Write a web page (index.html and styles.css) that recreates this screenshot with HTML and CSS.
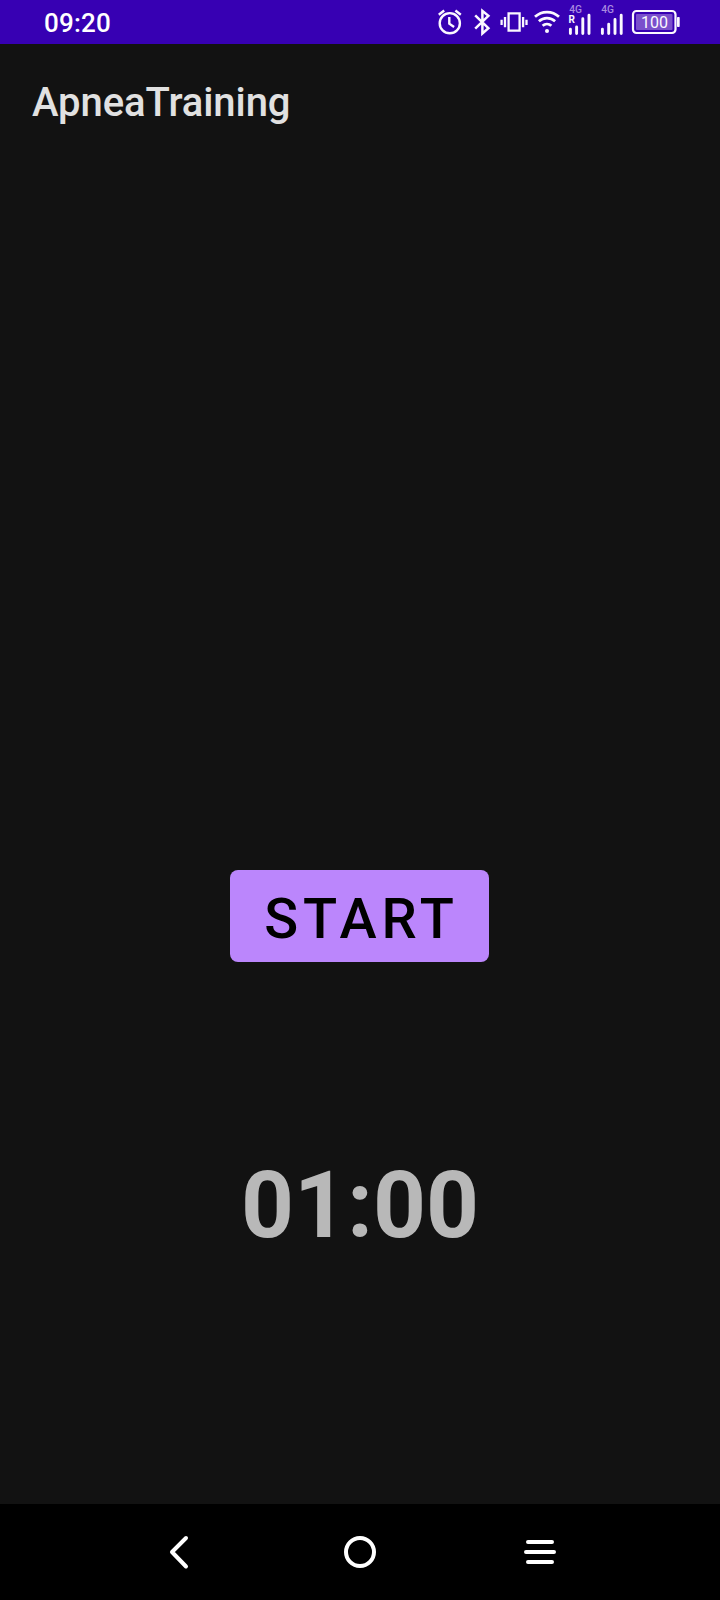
FILE: index.html
```html
<!DOCTYPE html>
<html lang="en">
<head>
<meta charset="utf-8">
<title>ApneaTraining</title>
<link rel="stylesheet" href="styles.css">
</head>
<body>
<div class="screen">
  <header class="status">
    <span class="clock">09:20</span>
    <div class="icons">
      <svg class="icon" width="30" height="44" viewBox="436 0 30 44" stroke-width="2.4">
        <circle cx="449.8" cy="23.2" r="10.1"/>
        <path d="M449.3 17v6.7l4.8 3.2M438.8 14.8l5.4-4.3M460.8 14.8l-5.4-4.3"/>
      </svg>
      <svg class="icon" width="30" height="44" viewBox="466 0 30 44" stroke-width="2.5">
        <path d="M475.2 15.3l13.2 12.9-6 5.2V10.8l6 5-13.2 12.9"/>
      </svg>
      <svg class="icon" width="34" height="44" viewBox="496 0 34 44" stroke-width="2.3">
        <path d="M508.6 13.3h11v17.4h-11zM505 17v10.3M501.6 19.7v5.2M523.1 17v10.3M526.5 19.7v5.2"/>
      </svg>
      <svg class="icon" width="34" height="44" viewBox="530 0 34 44" stroke-width="2.7">
        <path d="M535 16.8a17.5 17.5 0 0 1 24 0M538.9 21.2a12 12 0 0 1 16.2 0M542.6 25.7a6.6 6.6 0 0 1 8.8 0"/>
        <circle class="solid" cx="547" cy="31" r="2"/>
      </svg>
      <svg class="icon" width="32" height="44" viewBox="564 0 32 44" stroke-width="2.9">
        <path class="round" d="M570.4 29.2v4.3M576.6 27v6.5M582.8 18.7v14.8M589 15.3v18.2"/>
        <text class="net" x="569.3" y="13.4">4G</text>
        <text class="roam" x="568.5" y="22.8">R</text>
      </svg>
      <svg class="icon" width="32" height="44" viewBox="596 0 32 44" stroke-width="2.9">
        <path class="round" d="M602.4 29.2v4.3M608.7 24.3v9.2M615 19.5v14M621.2 15.3v18.2"/>
        <text class="net" x="601.3" y="13.4">4G</text>
      </svg>
      <svg class="icon" width="56" height="44" viewBox="628 0 56 44" stroke-width="2.2">
        <rect x="633" y="11" width="42.5" height="22" rx="3.5"/>
        <rect class="charge" x="636" y="14" width="36.5" height="16" rx="1"/>
        <rect class="solid" x="677" y="17" width="2.7" height="10" rx=".7"/>
        <text class="level" x="654.6" y="28.2" text-anchor="middle">100</text>
      </svg>
    </div>
  </header>
  <h1 class="title">ApneaTraining</h1>
  <main class="content">
    <button class="start">START</button>
    <div class="timer">01:00</div>
  </main>
  <nav class="nav">
    <svg class="icon" width="180" height="96" viewBox="90 1504 180 96" stroke-width="4">
      <path class="round" d="M186 1538l-14 14 14 14.5"/>
    </svg>
    <svg class="icon" width="180" height="96" viewBox="270 1504 180 96" stroke-width="4">
      <circle cx="360" cy="1552" r="14"/>
    </svg>
    <svg class="icon" width="180" height="96" viewBox="450 1504 180 96" stroke-width="4">
      <path class="round" d="M528 1542h24M526 1552h28M528 1562h24"/>
    </svg>
  </nav>
</div>
</body>
</html>
```
FILE: styles.css
```css
body {
  margin: 0;
  background: #121212;
  font-family: Roboto, "Liberation Sans", sans-serif;
}

.screen {
  display: flex;
  flex-direction: column;
  width: 720px;
  height: 1600px;
  overflow: hidden;
}

.status {
  display: flex;
  justify-content: space-between;
  align-items: center;
  height: 44px;
  box-sizing: border-box;
  padding: 0 36px 0 44px;
  background: #3700b3;
  color: #fff;
}

.clock {
  padding-top: 1px;
  font-size: 26px;
  line-height: 42px;
  font-weight: 500;
  letter-spacing: 0.2px;
}

.icons {
  display: flex;
}

.icon {
  display: block;
  fill: none;
  stroke: #fbf8ff;
}

.solid {
  fill: #fbf8ff;
  stroke: none;
}

.round {
  stroke-linecap: round;
  stroke-linejoin: round;
}

.charge {
  fill: #7a4fcc;
  stroke: none;
}

.net,
.roam,
.level {
  stroke: none;
  fill: #fbf8ff;
}

.net {
  font-size: 10.2px;
  font-weight: 500;
  fill: #a98ae0;
}

.roam {
  font-size: 10px;
  font-weight: 700;
}

.level {
  font-size: 16px;
}

.title {
  margin: 0;
  padding-left: 32px;
  height: 112px;
  line-height: 118px;
  font-size: 40px;
  font-weight: 500;
  letter-spacing: -0.08px;
  color: #e1e1e1;
}

.content {
  flex: 1;
  display: flex;
  flex-direction: column;
  align-items: center;
  padding-top: 714px;
}

.start {
  width: 259px;
  height: 92px;
  margin-right: 1px;
  padding: 6px 0 0 4px;
  border: 0;
  border-radius: 8px;
  background: #bb86fc;
  color: #000;
  font: 500 56px/86px Roboto, "Liberation Sans", sans-serif;
  letter-spacing: 4.9px;
}

.timer {
  margin-top: 190px;
  font-size: 92.4px;
  line-height: 108px;
  font-weight: 700;
  color: #b8b8b8;
}

.nav {
  display: flex;
  justify-content: center;
  height: 96px;
  background: #000;
}

.nav .icon {
  stroke: #fff;
}
```
